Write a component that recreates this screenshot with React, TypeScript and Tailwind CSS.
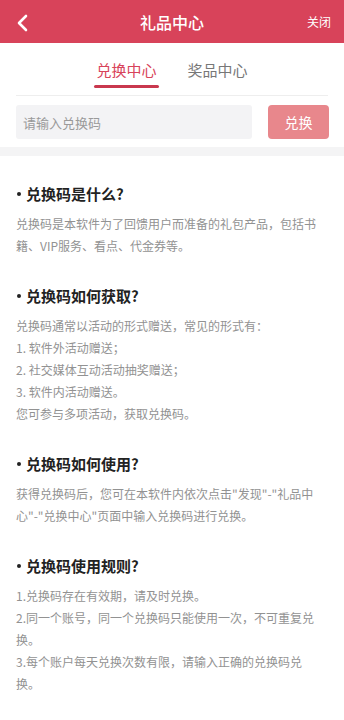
import type { ReactNode } from "react";

// lines are split where the original screen wraps them
const sections: { title: string; lines: string[][] }[] = [
  {
    title: "兑换码是什么?",
    lines: [["兑换码是本软件为了回馈用户而准备的礼包产品，包括书籍、VIP服务、看点、代金券等。"]],
  },
  {
    title: "兑换码如何获取?",
    lines: [
      ["兑换码通常以活动的形式赠送，常见的形式有："],
      ["1. 软件外活动赠送；"],
      ["2. 社交媒体互动活动抽奖赠送；"],
      ["3. 软件内活动赠送。"],
      ["您可参与多项活动，获取兑换码。"],
    ],
  },
  {
    title: "兑换码如何使用?",
    lines: [["获得兑换码后，您可在本软件内依次点击\"发现\"-\"礼品中", "心\"-\"兑换中心\"页面中输入兑换码进行兑换。"]],
  },
  {
    title: "兑换码使用规则?",
    lines: [
      ["1.兑换码存在有效期，请及时兑换。"],
      ["2.同一个账号，同一个兑换码只能使用一次，不可重复兑", "换。"],
      ["3.每个账户每天兑换次数有限，请输入正确的兑换码兑", "换。"],
    ],
  },
];

function Section({ title, children }: { title: string; children: ReactNode }) {
  return (
    <section className="mb-[28px]">
      <h2 className="flex items-center text-[15px] leading-[22px] font-bold text-[#222]">
        <span className="mr-[5px] ml-[1px] h-[4px] w-[4px] rounded-full bg-[#222]" />
        {title}
      </h2>
      <div className="mt-[8px] text-[12px] leading-[22px] text-[#929292]">{children}</div>
    </section>
  );
}

export default function App() {
  return (
    <div
      className="min-h-[720px] w-full bg-white"
      style={{ fontFamily: '"Noto Sans CJK SC", "Noto Sans", sans-serif' }}
    >
      <header className="relative flex h-[43px] items-center justify-center bg-[#d8435a] text-white">
        <button type="button" className="absolute left-[16px] top-[14px]">
          <svg width="14" height="18" viewBox="0 0 14 18" fill="none">
            <path d="M10 2 L3 9 L10 16" stroke="#fff" strokeWidth="2.6" strokeLinecap="round" strokeLinejoin="round" />
          </svg>
        </button>
        <h1 className="text-[16px] font-medium">礼品中心</h1>
        <span className="absolute right-[13px] text-[12px]">关闭</span>
      </header>

      <nav className="mx-4 flex h-[53px] items-center justify-center gap-[31px] border-b border-[#eeeeee] pt-[3px]">
        <div className="relative text-[15px] text-[#d8435a]">
          兑换中心
          <span className="absolute -left-[2px] -right-[2px] top-[26px] h-[3px] rounded-full bg-[#c9384e]" />
        </div>
        <div className="text-[15px] text-[#777]">奖品中心</div>
      </nav>

      <div className="flex items-center gap-[16px] px-4 pt-[9px] pb-[8px]">
        <input
          className="h-[34px] flex-1 rounded-[3px] bg-[#f3f3f5] px-[7px] text-[13px] text-[#333] outline-none placeholder:text-[#9a9a9a]"
          placeholder="请输入兑换码"
        />
        <button
          type="button"
          className="mr-[-1px] h-[34px] w-[61px] rounded-[4px] bg-[#e8878c] text-[14px] text-white"
        >
          兑换
        </button>
      </div>
      <div className="h-[9px] bg-[#f4f4f5]" />

      <main className="px-4 pt-[27px]">
        {sections.map((s) => (
          <Section key={s.title} title={s.title}>
            {s.lines.map((parts) => (
              <p key={parts.join("")}>
                {parts.map((part) => (
                  <span key={part} className={parts.length > 1 ? "block" : ""}>
                    {part}
                  </span>
                ))}
              </p>
            ))}
          </Section>
        ))}
      </main>
    </div>
  );
}
